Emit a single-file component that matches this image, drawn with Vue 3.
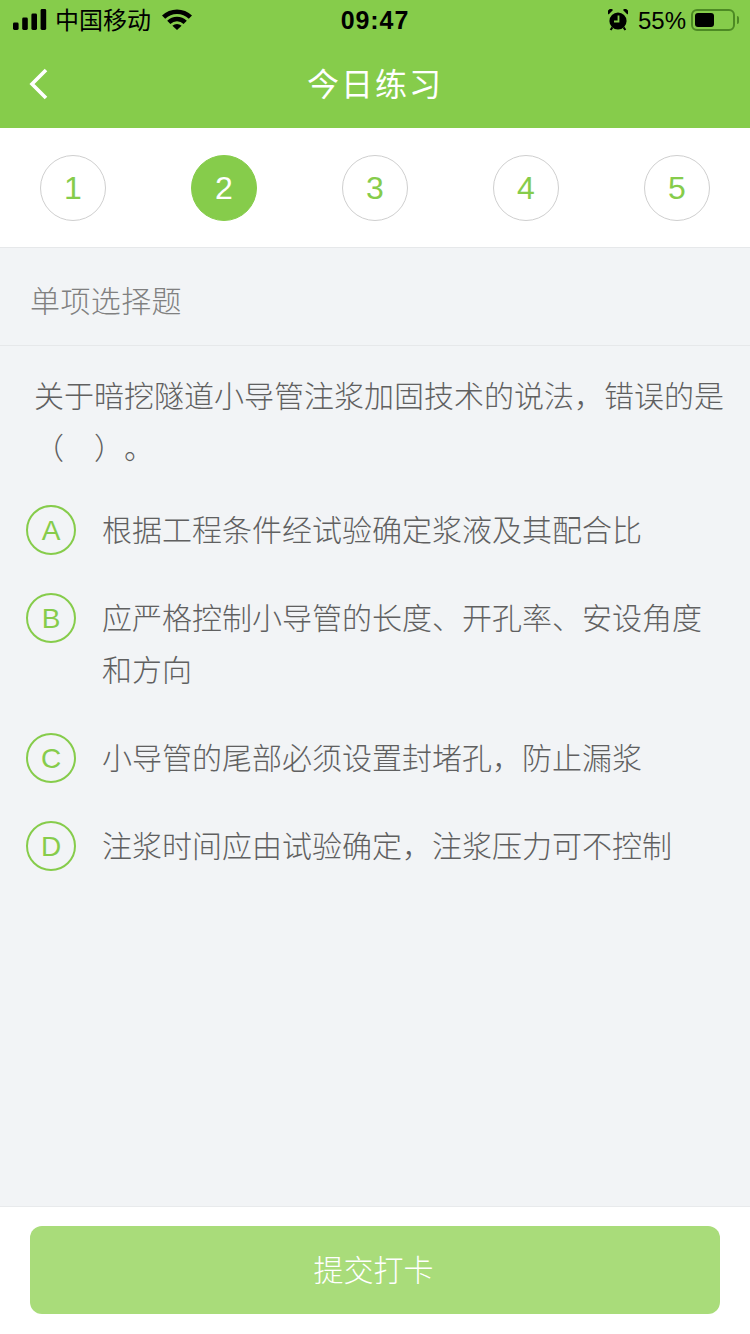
<script setup>
const steps = [1, 2, 3, 4, 5]
const options = [
  { key: 'A', text: '根据工程条件经试验确定浆液及其配合比' },
  { key: 'B', text: '应严格控制小导管的长度、开孔率、安设角度和方向' },
  { key: 'C', text: '小导管的尾部必须设置封堵孔，防止漏浆' },
  { key: 'D', text: '注浆时间应由试验确定，注浆压力可不控制' }
]
</script>

<template>
  <div class="page">
    <header class="top">
      <div class="status">
        <div class="status-left">
          <svg class="signal" width="34" height="21" viewBox="0 0 34 21">
            <rect x="0" y="13.5" width="5.6" height="7.5" rx="1.4" />
            <rect x="9.2" y="8.5" width="5.6" height="12.5" rx="1.4" />
            <rect x="18.4" y="4.5" width="5.6" height="16.5" rx="1.4" />
            <rect x="27.6" y="0" width="5.6" height="21" rx="1.4" />
          </svg>
          <span class="carrier">中国移动</span>
          <svg class="wifi" width="30" height="22" viewBox="0 0 30 22">
            <path d="M0 7.6 A21.5 21.5 0 0 1 30 7.6 L26.8 10.8 A17 17 0 0 0 3.2 10.8 Z" />
            <path d="M5.2 12.8 A14 14 0 0 1 24.8 12.8 L21.6 16 A9.6 9.6 0 0 0 8.4 16 Z" />
            <path d="M10.4 17.8 A7 7 0 0 1 19.6 17.8 L15 22 Z" />
          </svg>
        </div>
        <div class="time">09:47</div>
        <div class="status-right">
          <svg class="alarm" width="20" height="22" viewBox="0 0 20 22">
            <circle cx="10" cy="12" r="8.6" />
            <path d="M0.6 5.4 L5 1 A3.1 3.1 0 0 0 0.6 5.4 Z M19.4 5.4 L15 1 A3.1 3.1 0 0 1 19.4 5.4 Z" />
            <path d="M4.4 18.4 L2.6 21 M15.6 18.4 L17.4 21" stroke="#000" stroke-width="2" />
            <path d="M10.5 6.5 V12.5 H6" fill="none" stroke="#86cc4b" stroke-width="1.8" />
          </svg>
          <span class="percent">55%</span>
          <div class="battery"><div class="battery-fill" :style="{ width: '53%' }"></div></div>
          <div class="battery-cap"></div>
        </div>
      </div>
      <div class="nav">
        <svg class="back" width="20" height="32" viewBox="0 0 20 32">
          <path d="M17 2 L3 16 L17 30" fill="none" stroke="#fff" stroke-width="3.6" />
        </svg>
        <h1 class="title">今日练习</h1>
      </div>
    </header>

    <div class="steps">
      <div v-for="n in steps" :key="n" class="step" :class="{ active: n === 2 }">{{ n }}</div>
    </div>

    <main class="content">
      <div class="type">单项选择题</div>
      <div class="body">
        <p class="question">关于暗挖隧道小导管注浆加固技术的说法，错误的是（　）。</p>
        <ul class="options">
          <li v-for="o in options" :key="o.key" class="option">
            <span class="badge">{{ o.key }}</span>
            <span class="option-text">{{ o.text }}</span>
          </li>
        </ul>
      </div>
    </main>

    <footer class="footer">
      <button class="submit">提交打卡</button>
    </footer>
  </div>
</template>

<style>
html, body { margin: 0; background: #f2f4f6; }
</style>

<style scoped>
.page {
  width: 750px;
  height: 1334px;
  display: flex;
  flex-direction: column;
  background: #f2f4f6;
  font-family: "Noto Sans CJK SC", "Liberation Sans", sans-serif;
  overflow: hidden;
  text-spacing-trim: space-all;
}
.top { background: #86cc4b; height: 128px; }
.status {
  height: 40px;
  display: grid;
  grid-template-columns: 1fr auto 1fr;
  align-items: center;
  color: #000;
  font-size: 24px;
}
.status-left { display: flex; align-items: center; padding-left: 13px; }
.signal { fill: #000; margin-right: 9px; margin-top: -1px; }
.carrier { line-height: 40px; margin-top: -3px; margin-left: -1px; }
.wifi { fill: #000; margin-left: 11px; margin-top: -2px; }
.time {
  font-family: "Liberation Sans", sans-serif;
  font-weight: 700;
  font-size: 25px;
  letter-spacing: 0.9px;
}
.status-right { display: flex; align-items: center; justify-content: flex-end; padding-right: 11px; }
.alarm { fill: #000; margin-right: 10px; margin-top: -1px; }
.percent { font-family: "Liberation Sans", sans-serif; margin-right: 5px; margin-top: 1px; }
.battery {
  width: 44px;
  height: 22px;
  margin-top: -1px;
  box-sizing: border-box;
  border: 2px solid #4d8a24;
  border-radius: 6px;
  padding: 2px;
}
.battery-fill { height: 100%; background: #000; border-radius: 3px; }
.battery-cap { width: 2px; height: 8px; background: #4d8a24; margin-left: 2px; border-radius: 0 2px 2px 0; }
.nav { position: relative; height: 88px; display: flex; align-items: center; justify-content: center; }
.back { position: absolute; left: 29px; top: 28px; }
.title {
  margin: -5px 0 0;
  font-size: 32px;
  font-weight: 400;
  color: #fff;
  letter-spacing: 2px;
}
.steps {
  height: 120px;
  background: #fff;
  display: flex;
  justify-content: space-between;
  align-items: flex-start;
  padding: 27px 40px 0;
  box-sizing: border-box;
  border-bottom: 1px solid #e6e8ea;
}
.step {
  width: 66px;
  height: 66px;
  box-sizing: border-box;
  border: 1px solid #cfcfcf;
  border-radius: 50%;
  display: flex;
  align-items: center;
  justify-content: center;
  font-family: "Liberation Sans", sans-serif;
  font-size: 32px;
  color: #86cc4b;
}
.step.active { background: #86cc4b; border-color: #86cc4b; color: #fff; }
.content { flex: 1; min-height: 0; }
.type {
  height: 98px;
  box-sizing: border-box;
  border-bottom: 1px solid #e6e8ea;
  padding: 4px 30px 0;
  display: flex;
  align-items: center;
  font-size: 30px;
  letter-spacing: 0.4px;
  color: #808080;
  font-weight: 300;
}
.body { padding-top: 22px; }
.question {
  margin: 0;
  padding: 0 26px 0 34px;
  font-size: 30px;
  line-height: 52px;
  color: #606060;
  font-weight: 300;
}
.options { list-style: none; margin: 32px 0 0; padding: 0; display: flex; flex-direction: column; gap: 36px; }
.option { display: flex; align-items: flex-start; padding: 0 30px 0 26px; }
.badge {
  flex: none;
  width: 50px;
  height: 50px;
  margin-top: 1px;
  padding-top: 2px;
  box-sizing: border-box;
  border: 2px solid #86cc4b;
  border-radius: 50%;
  display: flex;
  align-items: center;
  justify-content: center;
  font-family: "Liberation Sans", sans-serif;
  font-size: 28px;
  color: #86cc4b;
}
.option-text {
  margin: -2px 0 2px 26px;
  font-size: 30px;
  line-height: 52px;
  color: #606060;
  font-weight: 300;
}
.footer {
  height: 128px;
  box-sizing: border-box;
  background: #fff;
  border-top: 1px solid #e8eaec;
  padding: 19px 30px 0;
}
.submit {
  display: block;
  width: 100%;
  height: 88px;
  border: none;
  border-radius: 12px;
  background: #a9dc7a;
  color: #fff;
  font-family: inherit;
  font-size: 30px;
  font-weight: 300;
  padding: 0 3px 4px 0;
}
</style>
